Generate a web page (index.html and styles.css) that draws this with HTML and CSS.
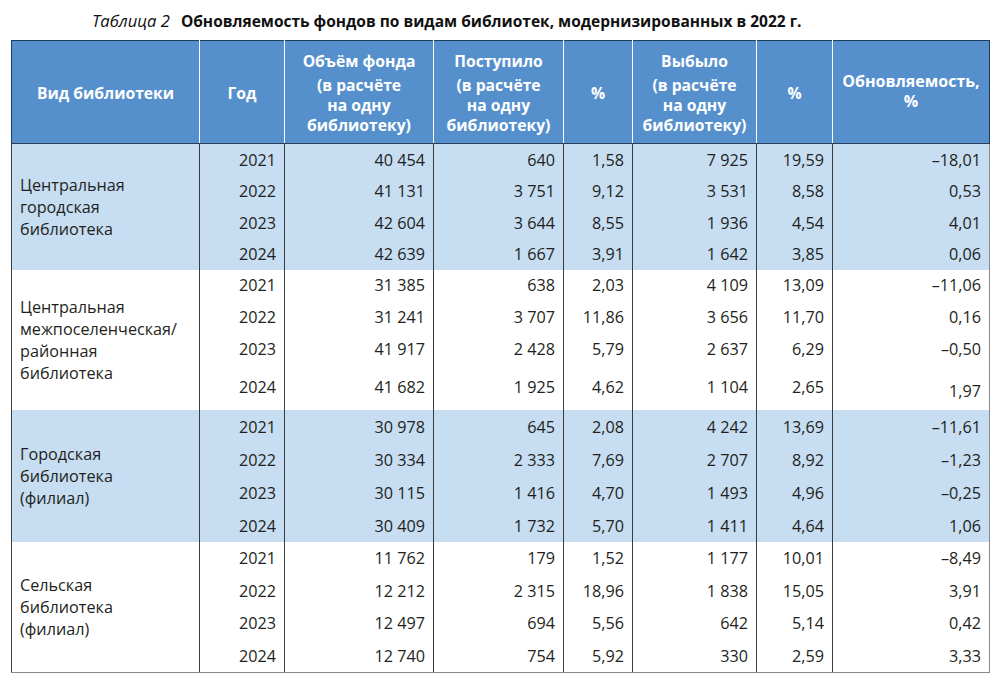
FILE: index.html
```html
<!DOCTYPE html>
<html lang="ru">
<head>
<meta charset="utf-8">
<title>Таблица 2</title>
<link rel="stylesheet" href="styles.css">
</head>
<body>
<div class="caption"><span class="cap-num">Таблица 2</span><span class="cap-title">Обновляемость фондов по видам библиотек, модернизированных в 2022 г.</span></div>
<table class="tbl">
<colgroup>
<col class="c1"><col class="c2"><col class="c3"><col class="c4"><col class="c5"><col class="c6"><col class="c7"><col class="c8">
</colgroup>
<thead>
<tr>
<th>Вид библиотеки</th>
<th>Год</th>
<th><div class="h1">Объём фонда</div><div>(в расчёте<br>на одну<br>библиотеку)</div></th>
<th><div class="h1">Поступило</div><div>(в расчёте<br>на одну<br>библиотеку)</div></th>
<th>%</th>
<th><div class="h1">Выбыло</div><div>(в расчёте<br>на одну<br>библиотеку)</div></th>
<th>%</th>
<th class="hlast">Обновляемость,<br>%</th>
</tr>
</thead>
<tbody class="g-blue g1">
<tr><td class="lbl" rowspan="4">Центральная<br>городская<br>библиотека</td><td>2021</td><td>40 454</td><td>640</td><td>1,58</td><td>7 925</td><td>19,59</td><td>–18,01</td></tr>
<tr><td>2022</td><td>41 131</td><td>3 751</td><td>9,12</td><td>3 531</td><td>8,58</td><td>0,53</td></tr>
<tr><td>2023</td><td>42 604</td><td>3 644</td><td>8,55</td><td>1 936</td><td>4,54</td><td>4,01</td></tr>
<tr><td>2024</td><td>42 639</td><td>1 667</td><td>3,91</td><td>1 642</td><td>3,85</td><td>0,06</td></tr>
</tbody>
<tbody class="g-white g2">
<tr><td class="lbl" rowspan="4">Центральная<br>межпоселенческая/<br>районная<br>библиотека</td><td>2021</td><td>31 385</td><td>638</td><td>2,03</td><td>4 109</td><td>13,09</td><td>–11,06</td></tr>
<tr><td>2022</td><td>31 241</td><td>3 707</td><td>11,86</td><td>3 656</td><td>11,70</td><td>0,16</td></tr>
<tr><td>2023</td><td>41 917</td><td>2 428</td><td>5,79</td><td>2 637</td><td>6,29</td><td>–0,50</td></tr>
<tr class="tall"><td>2024</td><td>41 682</td><td>1 925</td><td>4,62</td><td>1 104</td><td>2,65</td><td class="low">1,97</td></tr>
</tbody>
<tbody class="g-blue g3">
<tr><td class="lbl" rowspan="4">Городская<br>библиотека<br>(филиал)</td><td>2021</td><td>30 978</td><td>645</td><td>2,08</td><td>4 242</td><td>13,69</td><td>–11,61</td></tr>
<tr><td>2022</td><td>30 334</td><td>2 333</td><td>7,69</td><td>2 707</td><td>8,92</td><td>–1,23</td></tr>
<tr><td>2023</td><td>30 115</td><td>1 416</td><td>4,70</td><td>1 493</td><td>4,96</td><td>–0,25</td></tr>
<tr><td>2024</td><td>30 409</td><td>1 732</td><td>5,70</td><td>1 411</td><td>4,64</td><td>1,06</td></tr>
</tbody>
<tbody class="g-white g4">
<tr><td class="lbl" rowspan="4">Сельская<br>библиотека<br>(филиал)</td><td>2021</td><td>11 762</td><td>179</td><td>1,52</td><td>1 177</td><td>10,01</td><td>–8,49</td></tr>
<tr><td>2022</td><td>12 212</td><td>2 315</td><td>18,96</td><td>1 838</td><td>15,05</td><td>3,91</td></tr>
<tr><td>2023</td><td>12 497</td><td>694</td><td>5,56</td><td>642</td><td>5,14</td><td>0,42</td></tr>
<tr><td>2024</td><td>12 740</td><td>754</td><td>5,92</td><td>330</td><td>2,59</td><td>3,33</td></tr>
</tbody>
</table>
</body>
</html>
```
FILE: styles.css
```css
html, body {
  margin: 0;
  padding: 0;
  background: #ffffff;
}
body {
  font-family: "Open Sans", "Noto Sans", "Liberation Sans", sans-serif;
  color: #231f20;
}
.caption {
  height: 40px;
  box-sizing: border-box;
  padding: 10px 0 0 92px;
  font-size: 15.5px;
  line-height: 22px;
  white-space: nowrap;
  color: #111;
}
.cap-num {
  font-style: italic;
  font-size: 16.6px;
  margin-right: 11px;
}
.cap-title {
  font-weight: 700;
  font-size: 15.5px;
}
.tbl {
  margin-left: 11px;
  width: 979px;
  border-collapse: collapse;
  table-layout: fixed;
  font-size: 16.2px;
}
.c1 { width: 188px; }
.c2 { width: 85px; }
.c3 { width: 149px; }
.c4 { width: 130px; }
.c5 { width: 69px; }
.c6 { width: 124px; }
.c7 { width: 76px; }
.c8 { width: 157px; }
.tbl thead th {
  background: #5590cd;
  color: #ffffff;
  font-weight: 700;
  font-size: 15.7px;
  text-align: center;
  vertical-align: middle;
  height: 100px;
  padding: 2px 3px 0;
  line-height: 20px;
  border-left: 1px solid #ffffff;
  border-right: 1px solid #ffffff;
  border-top: 1px solid #1e3b5c;
  border-bottom: 1px solid #2a3f57;
}
.tbl thead th:first-child {
  border-left: 1px solid #1e3b5c;
}
.tbl thead th:last-child {
  border-right: 1px solid #1e3b5c;
}
.tbl thead .h1 {
  margin-bottom: 4px;
}
.tbl thead .hlast {
  font-size: 16px;
  padding-bottom: 2px;
  padding-top: 0;
  height: 100px;
}
.tbl tbody td {
  text-align: right;
  vertical-align: middle;
  padding: 0 8px 0 4px;
  height: 31.5px;
  line-height: 22px;
  border-left: 1px solid #3b3b3b;
  border-right: 1px solid #3b3b3b;
  white-space: nowrap;
}
.tbl tbody td.lbl {
  text-align: left;
  padding: 0 4px 0 8px;
  white-space: normal;
}
.g-blue td {
  background: #c6ddf2;
}
.g-white td {
  background: #ffffff;
}
.tbl tbody.g2 td {
  height: 29px;
  padding-bottom: 3px;
}
.tbl tbody.g2 tr.tall td {
  height: 38px;
}
.tbl tbody.g2 td.low {
  height: 35px;
  padding-top: 6px;
  padding-bottom: 0;
}
.tbl tbody.g2 td.lbl {
  height: auto;
  padding-bottom: 0;
}
.tbl tbody.g3 td {
  height: 33px;
}
.tbl tbody.g4 td {
  height: 32.5px;
}
.tbl tbody.g3 td.lbl, .tbl tbody.g4 td.lbl {
  height: auto;
}
.g4 tr:last-child td {
  border-bottom: 1px solid #8a8a8a;
}
.tbl tbody tr td:last-child {
  border-right: 1px solid #8a8a8a;
}
.tbl tbody tr td.lbl {
  border-left: 1px solid #3b3b3b;
  border-bottom: none;
}
.tbl tbody.g4 tr td.lbl {
  border-bottom: 1px solid #8a8a8a;
}
```
